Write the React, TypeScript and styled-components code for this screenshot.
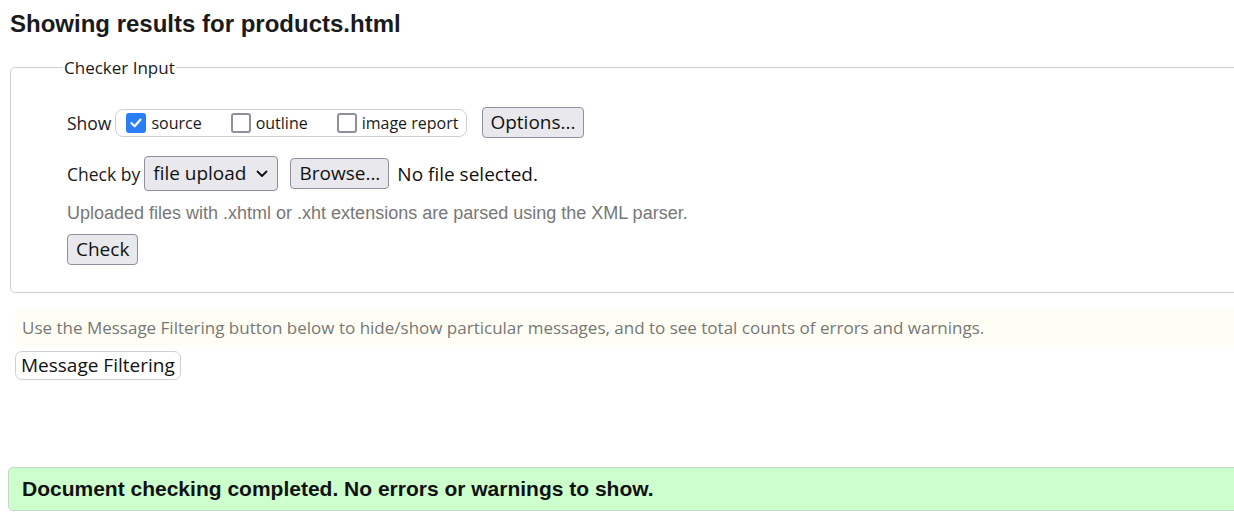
import React from "react";
import styled, { createGlobalStyle } from "styled-components";

const Global = createGlobalStyle`
  html, body { margin: 0; padding: 0; background: #fff; overflow: hidden; }
  body { font-family: "Open Sans", "Noto Sans", sans-serif; color: #111; }
`;

const Page = styled.div`
  display: flex;
  flex-direction: column;
  width: 1234px;
  overflow: hidden;
`;

const Title = styled.h2`
  margin: 10px 0 0 10px;
  font-family: "Liberation Sans", Arial, sans-serif;
  font-weight: 700;
  font-size: 24px;
  line-height: 28px;
  color: #1a1a1a;
`;

const Fieldset = styled.fieldset`
  margin: 18px 0 0 10px;
  width: 1300px;
  min-width: 0;
  padding: 0 0 27px 56px;
  border: 1px solid #cfcfcf;
  border-radius: 5px;
  box-sizing: border-box;
  display: flex;
  flex-direction: column;
`;

const Legend = styled.legend`
  margin-left: -4px;
  padding: 0 1px;
  font-size: 17px;
  line-height: 23px;
  color: #1a1a1a;
`;

const Row = styled.div<{ $mt: number }>`
  display: flex;
  align-items: center;
  margin-top: ${(p) => p.$mt}px;
`;

const Label = styled.span`
  font-size: 17.5px;
  color: #1a1a1a;
  margin-right: 4px;
`;

const Group = styled.div`
  display: flex;
  align-items: center;
  height: 26px;
  border: 1px solid #cfcfcf;
  border-radius: 8px;
  padding: 0 8px 0 10px;
  gap: 29px;
`;

const CheckItem = styled.label`
  display: flex;
  align-items: center;
  gap: 5px;
  font-size: 16px;
  color: #1a1a1a;
`;

const Box = styled.span<{ $checked?: boolean }>`
  display: inline-flex;
  align-items: center;
  justify-content: center;
  width: 20px;
  height: 20px;
  box-sizing: border-box;
  border-radius: 3px;
  border: ${(p) => (p.$checked ? "none" : "2px solid #8f8f9d")};
  background: ${(p) => (p.$checked ? "#2b7ff6" : "#fff")};
`;

const Button = styled.button<{ $plain?: boolean; $ml?: number; $px?: number }>`
  font-family: "Open Sans", "Noto Sans", sans-serif;
  font-size: 19px;
  line-height: 25px;
  color: #111;
  margin-left: ${(p) => p.$ml ?? 0}px;
  padding: ${(p) => (p.$plain ? "1px 5px" : `2px ${p.$px ?? 8}px`)};
  background: ${(p) => (p.$plain ? "#fff" : "#e9e9ed")};
  border: 1px solid ${(p) => (p.$plain ? "#cfcfcf" : "#8f8f9d")};
  border-radius: ${(p) => (p.$plain ? "7px" : "4px")};
  cursor: pointer;
`;

const Select = styled.div`
  display: flex;
  align-items: center;
  gap: 10px;
  font-size: 19px;
  line-height: 25px;
  color: #111;
  padding: 4px 9px 4px 8px;
  background: #e9e9ed;
  border: 1px solid #8f8f9d;
  border-radius: 4px;
`;

const FileText = styled.span`
  font-size: 19px;
  color: #111;
  margin-left: 8px;
`;

const Hint = styled.p`
  margin: 11px 0 0;
  font-family: "Liberation Sans", Arial, sans-serif;
  font-size: 18px;
  line-height: 22px;
  color: #777;
`;

const CheckRow = styled.div`
  margin-top: 10px;
  display: flex;
`;

const FilterInfo = styled.div`
  margin: 16px 0 0 15px;
  background: #fffef5;
  padding: 7px 7px 6px;
  font-size: 17px;
  line-height: 23px;
  color: #777;
`;

const FilterRow = styled.div`
  margin: 6px 0 0 15px;
  display: flex;
`;

const Success = styled.div`
  margin: 87px 0 0 8px;
  width: 1300px;
  box-sizing: border-box;
  background: #ccffcc;
  border: 1px solid #c4d8c4;
  border-radius: 5px;
  padding: 9px 13px;
  font-family: "Liberation Sans", Arial, sans-serif;
  font-weight: 700;
  font-size: 21px;
  line-height: 24px;
  color: #111;
`;

const Check = () => (
  <svg width="14" height="14" viewBox="0 0 14 14">
    <path d="M2.5 7.2 L5.7 10.2 L11.5 3.6" fill="none" stroke="#fff" strokeWidth="2.2" strokeLinecap="round" strokeLinejoin="round" />
  </svg>
);

const Chevron = () => (
  <svg width="12" height="8" viewBox="0 0 12 8">
    <path d="M1.5 1.5 L6 6 L10.5 1.5" fill="none" stroke="#111" strokeWidth="1.8" strokeLinecap="round" strokeLinejoin="round" />
  </svg>
);

export default function App() {
  return (
    <Page>
      <Global />
      <Title>Showing results for products.html</Title>
      <Fieldset>
        <Legend>Checker Input</Legend>
        <Row $mt={28}>
          <Label>Show</Label>
          <Group>
            <CheckItem>
              <Box $checked>
                <Check />
              </Box>
              source
            </CheckItem>
            <CheckItem>
              <Box />
              outline
            </CheckItem>
            <CheckItem>
              <Box />
              image report
            </CheckItem>
          </Group>
          <Button $ml={15} $px={7}>Options...</Button>
        </Row>
        <Row $mt={18}>
          <Label>Check by</Label>
          <Select>
            file upload
            <Chevron />
          </Select>
          <Button $ml={12}>Browse...</Button>
          <FileText>No file selected.</FileText>
        </Row>
        <Hint>Uploaded files with .xhtml or .xht extensions are parsed using the XML parser.</Hint>
        <CheckRow>
          <Button>Check</Button>
        </CheckRow>
      </Fieldset>
      <FilterInfo>
        Use the Message Filtering button below to hide/show particular messages, and to see total counts of errors and warnings.
      </FilterInfo>
      <FilterRow>
        <Button $plain>Message Filtering</Button>
      </FilterRow>
      <Success>Document checking completed. No errors or warnings to show.</Success>
    </Page>
  );
}
